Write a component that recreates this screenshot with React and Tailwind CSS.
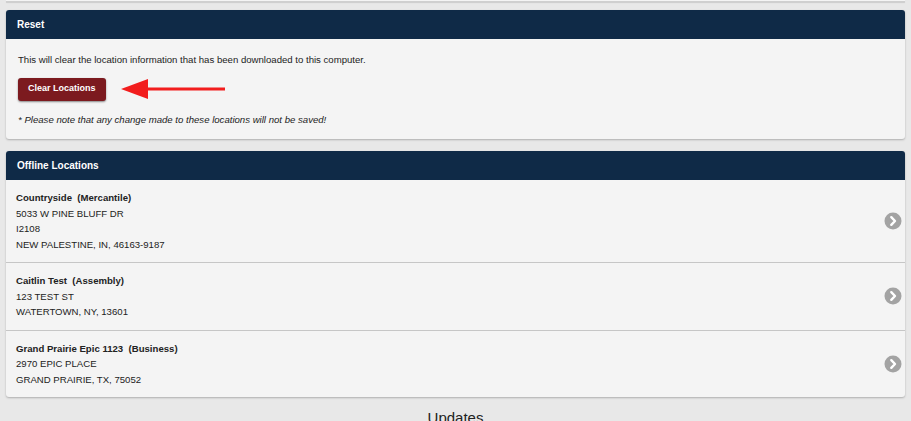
import React from 'react';

const locations = [
  {
    name: 'Countryside',
    type: 'Mercantile',
    lines: ['5033 W PINE BLUFF DR', 'I2108', 'NEW PALESTINE, IN, 46163-9187'],
  },
  {
    name: 'Caitlin Test',
    type: 'Assembly',
    lines: ['123 TEST ST', 'WATERTOWN, NY, 13601'],
  },
  {
    name: 'Grand Prairie Epic 1123',
    type: 'Business',
    lines: ['2970 EPIC PLACE', 'GRAND PRAIRIE, TX, 75052'],
  },
];

const Chevron = () => (
  <svg width="18" height="18" viewBox="0 0 18 18" className="shrink-0">
    <circle cx="9" cy="9" r="8.5" fill="#a3a3a3" />
    <path d="M7.3 5.2 L11 9 L7.3 12.8" fill="none" stroke="#fff" strokeWidth="2.4" strokeLinecap="round" strokeLinejoin="round" />
  </svg>
);

const Arrow = () => (
  <svg width="106" height="24" viewBox="0 0 106 24" className="shrink-0">
    <path d="M26 10.6 L104 10.6 L104 13.4 L26 13.4 Z" fill="#f21d1d" />
    <path d="M0 12 L27 2 L27 22 Z" fill="#f21d1d" />
  </svg>
);

const PanelHeader = ({ children }) => (
  <div className="h-[29px] bg-[#0f2a47] rounded-t-[3px] flex items-center px-[11px] text-white text-[10px] font-bold">
    {children}
  </div>
);

export default function App() {
  return (
    <div className="min-h-[421px] bg-[#e8e8e8] overflow-hidden" style={{ fontFamily: '"Liberation Sans", Arial, sans-serif' }}>
      <div className="mx-[6px] h-[2px] bg-[#f4f4f4] border-b border-[#cfcfcf] shadow-[0_1px_1px_rgba(0,0,0,0.12)]" />

      <div className="mx-[6px] mt-[8px] bg-[#f4f4f4] rounded-[3px] shadow-[0_1px_2px_rgba(0,0,0,0.25)]">
        <PanelHeader>Reset</PanelHeader>
        <div className="pl-[12px] pt-[13px] pb-[12px] text-[9.6px] text-[#222]">
          <p className="leading-[15px]">This will clear the location information that has been downloaded to this computer.</p>
          <div className="flex items-center gap-[15px] mt-[10px]">
            <button className="h-[23px] px-[10px] bg-[#7c1a1f] text-white text-[9px] font-bold rounded-[3px] shadow-[0_1px_2px_rgba(0,0,0,0.45)]">
              Clear Locations
            </button>
            <Arrow />
          </div>
          <p className="leading-[15px] mt-[11px] italic">* Please note that any change made to these locations will not be saved!</p>
        </div>
      </div>

      <div className="mx-[6px] mt-[12px] bg-[#f4f4f4] rounded-[3px] shadow-[0_1px_2px_rgba(0,0,0,0.25)]">
        <PanelHeader>Offline Locations</PanelHeader>
        {locations.map((loc, i) => (
          <div key={i} className={`flex items-center pl-[10px] pr-[3px] py-[10px] ${i > 0 ? 'border-t border-[#c6c6c6]' : ''}`}>
            <div className="flex-1 text-[9.6px] leading-[15.5px] text-[#222]">
              <div className="font-bold">
                {loc.name}&nbsp;&nbsp;({loc.type})
              </div>
              {loc.lines.map((l, j) => (
                <div key={j}>{l}</div>
              ))}
            </div>
            <Chevron />
          </div>
        ))}
      </div>

      <div className="text-center text-[15px] text-[#222] mt-[12px] leading-[18px]">Updates</div>
    </div>
  );
}
